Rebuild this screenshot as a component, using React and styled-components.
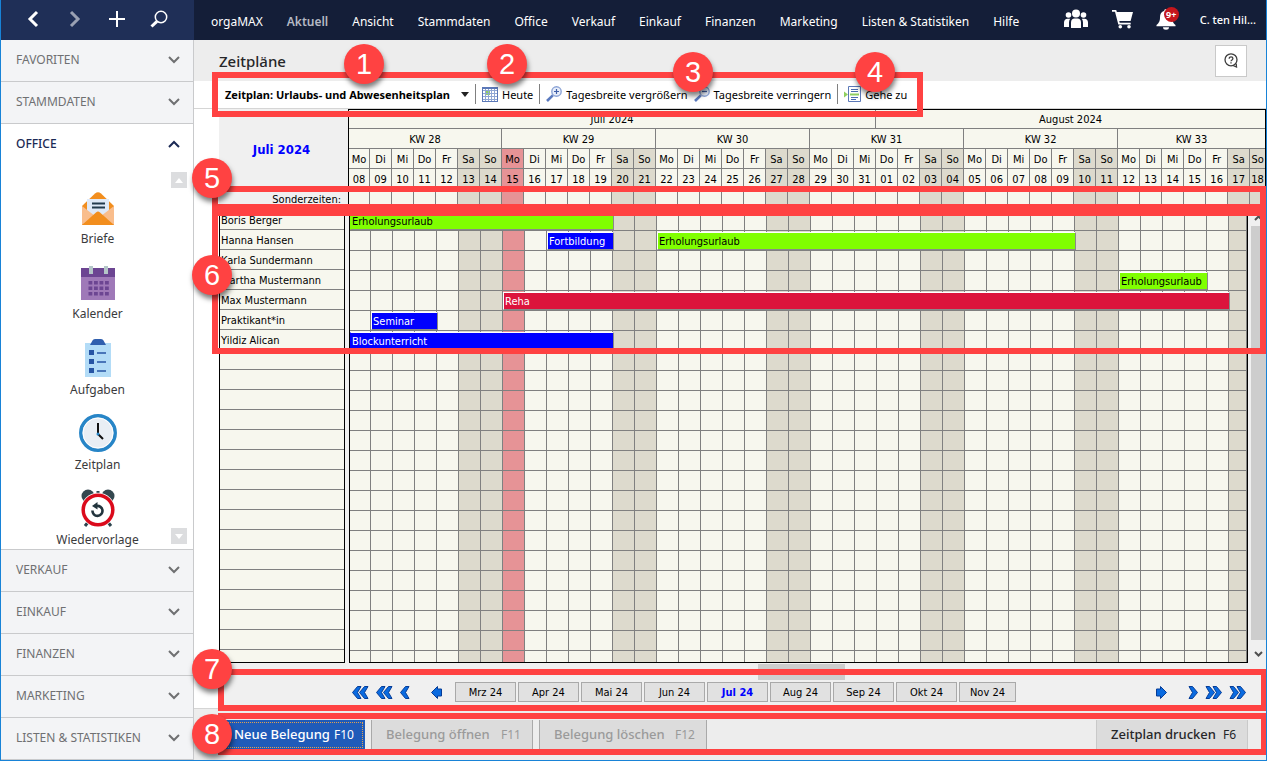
import React from "react";
import styled, { createGlobalStyle, css } from "styled-components";

const GlobalStyle = createGlobalStyle`
  *, *::before, *::after { box-sizing: border-box; }
  body { margin: 0; font-family: "Noto Sans", "Open Sans", sans-serif; font-size: 12px; color: #000; }
  button { font: inherit; color: inherit; border: 0; padding: 0; background: none; cursor: pointer; }
  ul { list-style: none; margin: 0; padding: 0; }
  svg { display: block; }
`;

const planFont = css`
  font-family: "DejaVu Sans Condensed", "DejaVu Sans", sans-serif;
  font-size: 11px;
`;

const RED = "#ff4242";
const LINE = "#808080";
const PAPER = "#f7f7ee";
const WEEKEND = "#dddacd";
const TODAY = "#e69396";

/* ---------- window ---------- */

const Window = styled.div`
  display: flex;
  flex-direction: column;
  height: 100vh;
  border: 1px solid #1883d7;
  border-top: 0;
  overflow: hidden;
  background: #fff;
`;

const TopBar = styled.header`
  display: flex;
  flex: none;
  height: 40px;
  background: #141e38;
  color: #fff;
`;

const QuickActions = styled.div`
  display: flex;
  flex: none;
  align-items: center;
  width: 193px;
  padding: 0 0 3px 11px;
  background: #1f2f57;
`;

const QuickButton = styled.button`
  display: grid;
  place-items: center;
  width: 42px;
  height: 36px;
  opacity: ${(p) => (p.$dim ? 0.55 : 1)};
`;

const MenuBar = styled.nav`
  display: flex;
  align-items: center;
  flex: 1;
  gap: 24px;
  padding: 3px 0 0 17px;
  white-space: nowrap;
`;

const MenuLink = styled.a`
  color: ${(p) => (p.$active ? "#b4b9c4" : "#fff")};
  font-weight: ${(p) => (p.$active ? 600 : 400)};
  text-decoration: none;
`;

const Status = styled.div`
  display: flex;
  flex: none;
  align-items: center;
  gap: 23px;
  padding: 0 10px 2px 0;
`;

const IconButton = styled.button`
  position: relative;
  display: block;
`;

const Count = styled.span`
  position: absolute;
  top: -1px;
  right: -2px;
  width: 15px;
  height: 15px;
  border-radius: 50%;
  background: #c4161c;
  font-size: 9px;
  font-weight: 700;
  line-height: 15px;
  text-align: center;
`;

const UserName = styled.button`
  font-size: 11px;
  font-weight: 500;
`;

const Content = styled.div`
  display: flex;
  flex: 1;
  min-height: 0;
`;

/* ---------- sidebar ---------- */

const Sidebar = styled.aside`
  display: flex;
  flex-direction: column;
  flex: none;
  width: 193px;
  border-right: 1px solid #c9cacc;
  background: #f3f4f6;
`;

const SectionButton = styled.button`
  display: flex;
  flex: none;
  align-items: center;
  justify-content: space-between;
  height: 42px;
  padding: 0 12px 2px 15px;
  border-bottom: 1px solid ${(p) => (p.$open ? "#fff" : "#c9cacc")};
  background: ${(p) => (p.$open ? "#fff" : "#f3f4f6")};
  color: ${(p) => (p.$open ? "#1b2a55" : "#6f7072")};
  font-weight: ${(p) => (p.$open ? 500 : 400)};
`;

const OfficePanel = styled.div`
  display: flex;
  flex: 1;
  min-height: 0;
  border-bottom: 1px solid #c9cacc;
  background: #fff;
`;

const OfficeList = styled.ul`
  flex: 1;
  padding: 23px 0 0 17px;
`;

const OfficeItem = styled.a`
  display: flex;
  flex-direction: column;
  align-items: center;
  justify-content: space-between;
  height: 59px;
  margin-bottom: 16px;
  color: #3a3a3c;
  text-decoration: none;
`;

const IconBox = styled.span`
  display: grid;
  flex: 1;
  place-items: center;
  padding-bottom: 4px;
`;

const ItemLabel = styled.span`
  line-height: 18px;
`;

const OfficeScroll = styled.div`
  display: flex;
  flex-direction: column;
  justify-content: space-between;
  flex: none;
  width: 22px;
  padding: 6px 6px 5px 0;
  margin-left: -6px;
`;

const ScrollStep = styled.button`
  display: grid;
  place-items: center;
  width: 16px;
  height: 16px;
  background: #dcdddf;
`;

/* ---------- main ---------- */

const Main = styled.main`
  display: flex;
  flex-direction: column;
  flex: 1;
  min-width: 0;
`;

const TitleBar = styled.div`
  display: flex;
  flex: none;
  align-items: center;
  justify-content: space-between;
  height: 41px;
  padding: 0 19px 0 25px;
  background: #ededed;
`;

const Title = styled.h1`
  margin: 0;
  color: #262628;
  font-size: 15px;
  font-weight: 500;
`;

const HelpButton = styled.button`
  display: grid;
  place-items: center;
  width: 32px;
  height: 32px;
  border: 1px solid #c9c9c9;
  background: #fff;
`;

const Toolbar = styled.div`
  position: relative;
  display: flex;
  flex: none;
  align-items: center;
  height: 28px;
  padding: 0 0 1px 31px;
  border-bottom: 1px solid #d5d5d5;
  font-size: 11px;
  white-space: nowrap;
`;

const Tool = styled.button`
  display: flex;
  align-items: center;
  gap: ${(p) => (p.$bold ? 11 : 4)}px;
  margin-right: 6px;
  font-weight: ${(p) => (p.$bold ? 700 : 400)};
`;

const Divider = styled.span`
  width: 1px;
  height: 20px;
  margin-right: 6px;
  background: #808080;
`;

const Plan = styled.section`
  display: flex;
  flex-direction: column;
  flex: 1;
  min-height: 0;
  margin-left: 25px;
  background: #f0f0f0;
  ${planFont}
`;

const PlanHead = styled.div`
  position: relative;
  display: flex;
  flex: none;
`;

const HeadSide = styled.div`
  display: flex;
  flex-direction: column;
  flex: none;
  width: 129px;
`;

const CurrentMonth = styled.div`
  display: grid;
  flex: 1;
  place-items: center;
  padding-right: 4px;
  color: #00f;
  font-size: 13px;
  font-weight: 700;
`;

const SpecialLabel = styled.div`
  height: 20px;
  padding: 1px 7px 0 0;
  line-height: 20px;
  text-align: right;
`;

const PlanTable = styled.table`
  width: 100%;
  border-spacing: 0;
  table-layout: fixed;
`;

const CalendarHead = styled.div`
  flex: 1;
  min-width: 0;
  border: 1px solid #000;
  border-bottom: 0;
  overflow: hidden;
`;

const cellTone = (p) => (p.$tone === "weekend" ? WEEKEND : p.$tone === "today" ? TODAY : PAPER);

const HeadCell = styled.th`
  height: ${(p) => p.$h || 20}px;
  padding: 2px 0 0;
  border-right: 1px solid ${LINE};
  border-bottom: 1px solid ${LINE};
  background: ${cellTone};
  font-weight: 400;
  line-height: 16px;
  white-space: nowrap;
  &:last-child { border-right: 0; }
`;

const PlanBody = styled.div`
  position: relative;
  display: flex;
  flex: 1 1 0;
  min-height: 0;
`;

const Names = styled.ul`
  flex: none;
  width: 126px;
  margin: 1px 4px 0 0;
  border: 1px solid #000;
  border-top: 0;
  background: ${PAPER};
  overflow: hidden;
`;

const Name = styled.li`
  height: 20px;
  padding: 1px 0 0 1px;
  border-bottom: 1px solid ${LINE};
  line-height: 20px;
`;

const GridFrame = styled.div`
  flex: 1;
  min-width: 0;
  margin-top: 2px;
  border: 1px solid #000;
  border-top: 0;
  overflow: hidden;
`;

const DayCell = styled.td`
  position: relative;
  height: 20px;
  padding: 0;
  border-right: 1px solid ${LINE};
  border-bottom: 1px solid ${LINE};
  background: ${cellTone};
`;

const Booking = styled.div`
  position: absolute;
  z-index: 1;
  top: 1px;
  left: 0;
  width: ${(p) => p.$days * 22 + (p.$first ? 0 : 1)}px;
  height: 18px;
  padding-left: ${(p) => (p.$first ? 1 : 1)}px;
  border: 1px solid;
  border-color: #fff #8a8a8a #8a8a8a ${(p) => (p.$first ? p.$color : "#fff")};
  background: ${(p) => p.$color};
  color: ${(p) => (p.$color === "#80ff00" ? "#000" : "#fff")};
  line-height: 17px;
  white-space: nowrap;
`;

const VScroll = styled.div`
  display: flex;
  flex-direction: column;
  align-items: center;
  justify-content: space-between;
  flex: none;
  width: 16px;
  margin-left: 2px;
  padding: 6px 0;
`;

const VThumb = styled.div`
  flex: 1;
  width: 15px;
  margin: 5px 0 11px;
  background: #cdcdcd;
`;

const HScroll = styled.div`
  display: flex;
  flex: none;
  align-items: center;
  justify-content: space-between;
  height: 17px;
  margin-left: 134px;
  padding: 1px 21px 0 4px;
`;

const HThumb = styled.div`
  width: 87px;
  height: 16px;
  background: #cdcdcd;
`;

const MonthNav = styled.nav`
  position: relative;
  display: flex;
  flex: none;
  align-items: center;
  height: 28px;
  padding: 0 20px 4px 133px;
`;

const JumpGroup = styled.div`
  display: flex;
  align-items: center;
  gap: 7px;
  &:last-of-type { margin-left: auto; }
`;

const JumpButton = styled.button`
  margin: ${(p) => (p.$step === "back" ? "0 0 0 13px" : p.$step === "forward" ? "0 13px 0 0" : "0")};
`;

const Months = styled.ul`
  display: flex;
  gap: 2px;
  margin: 0 auto 0 13px;
`;

const MonthButton = styled.button`
  width: ${(p) => (p.$last ? 57 : 61)}px;
  height: 20px;
  border: 1px solid #a9a9a9;
  background: #e1e1e1;
  color: ${(p) => (p.$active ? "#00f" : "#000")};
  font-weight: ${(p) => (p.$active ? 700 : 400)};
`;

const Footer = styled.footer`
  position: relative;
  display: flex;
  flex: none;
  height: 52px;
  gap: 6px;
  padding: 11px 18px 10px 25px;
  border-top: 1px solid #d5d5d5;
  background: #ededed;
`;

const Action = styled.button`
  display: flex;
  align-items: center;
  justify-content: space-between;
  width: ${(p) => p.$w}px;
  padding: 0 11px 2px 14px;
  border: solid #a9a9a9;
  border-width: 0 1px;
  background: #dcdcdc;
  color: #262628;
  font-size: 13px;
  font-weight: 500;
  white-space: nowrap;
  &:last-of-type { margin-left: auto; border-color: #c9c9c9; }
  &:disabled { color: #9a9a9a; }
  ${(p) =>
    p.$primary &&
    css`
      padding-left: 15px;
      border: 0;
      background: #1f5bb9;
      color: #fff;
      outline: 1px dotted #e0a050;
      outline-offset: -3px;
    `}
`;

const Key = styled.span`
  font-size: 12px;
  font-weight: 400;
`;

/* ---------- numbered markers ---------- */

const Frame = styled.div`
  position: absolute;
  z-index: 4;
  top: ${(p) => p.$top}px;
  left: ${(p) => p.$left}px;
  right: ${(p) => (p.$width ? "auto" : `${p.$right || 0}px`)};
  width: ${(p) => (p.$width ? `${p.$width}px` : "auto")};
  height: ${(p) => p.$height}px;
  border: 6px solid ${RED};
  pointer-events: none;
`;

const Marker = styled.span`
  position: absolute;
  z-index: 5;
  top: ${(p) => p.$top}px;
  left: ${(p) => p.$left}px;
  width: 40px;
  height: 40px;
  border-radius: 50%;
  background: ${RED};
  box-shadow: 1px 4px 5px rgba(0, 0, 0, 0.5);
  color: #fff;
  font: 29px/40px "Liberation Sans", Arial, sans-serif;
  text-align: center;
  pointer-events: none;
`;

/* ---------- icons ---------- */

const Chevron = ({ up }) => (
  <svg width="14" height="10" viewBox="0 0 14 10" fill="none" stroke="currentColor" strokeWidth="2">
    <path d={up ? "M2 8 7 3l5 5" : "M2 2l5 5 5-5"} />
  </svg>
);

const SmallArrow = ({ up, color = "#fff" }) => (
  <svg width="8" height="5" viewBox="0 0 8 5" fill={color}>
    <path d={up ? "M0 5 4 0l4 5z" : "M0 0h8L4 5z"} />
  </svg>
);

const ScrollChevron = ({ up }) => (
  <svg width="9" height="6" viewBox="0 0 9 6" fill="none" stroke="#505050" strokeWidth="2">
    <path d={up ? "M1 5l3.5-3.5L8 5" : "M1 1l3.5 3.5L8 1"} />
  </svg>
);

const BackIcon = ({ forward }) => (
  <svg width="12" height="18" viewBox="0 0 12 18" fill="none" stroke="#fff" strokeWidth="3">
    <path d={forward ? "M2 2l7 7-7 7" : "M10 2 3 9l7 7"} />
  </svg>
);

const PlusIcon = () => (
  <svg width="18" height="18" viewBox="0 0 18 18" stroke="#fff" strokeWidth="2">
    <path d="M1 9h16M9 1v16" />
  </svg>
);

const SearchIcon = () => (
  <svg width="18" height="18" viewBox="0 0 18 18" fill="none" stroke="#fff">
    <circle cx="11" cy="7" r="5.7" strokeWidth="1.5" />
    <path d="M7 11.3 1.5 16.5" strokeWidth="3" />
  </svg>
);

const PeopleIcon = () => (
  <svg width="26" height="20" viewBox="0 0 26 20" fill="#fff">
    <circle cx="13" cy="4.5" r="4" />
    <circle cx="5.5" cy="6" r="2.8" />
    <circle cx="20.5" cy="6" r="2.8" />
    <path d="M8 19v-5.500c0-2.500 1.500-4 3.500-4h3c2 0 3.500 1.500 3.500 4V19z" />
    <path d="M1 18v-4.500c0-2.300 1.500-3.700 3.500-3.700h2.700c-.8 1-1.200 2.200-1.200 3.700V18zM25 18v-4.500c0-2.300-1.500-3.700-3.500-3.700h-2.700c.8 1 1.200 2.200 1.200 3.700V18z" />
  </svg>
);

const CartIcon = () => (
  <svg width="21" height="19" viewBox="0 0 21 19" fill="#fff">
    <path d="M0 0h4.200l.7 2H21l-2.400 9H7.300l.4 1.800h11V14.500H6.300L3 1.700H0z" />
    <circle cx="8.300" cy="16.800" r="1.800" />
    <circle cx="17" cy="16.800" r="1.800" />
  </svg>
);

const BellIcon = () => (
  <svg width="21" height="22" viewBox="0 0 21 22" fill="#fff">
    <path d="M10 1c-1.200 0-1.700.8-1.700 1.800C5.300 3.600 4 6 4 9.300c0 4-.9 5.500-3.500 7.700v1.200h19V17C17 14.800 16 13.300 16 9.300c0-3.300-1.300-5.700-4.300-6.500C11.700 1.800 11.200 1 10 1z" />
    <path d="M7 19.200h6a3 2.500 0 0 1-6 0z" />
  </svg>
);

const HelpIcon = () => (
  <svg width="15" height="15" viewBox="0 0 15 15" fill="none" stroke="#3d3d3d">
    <circle cx="7" cy="6.800" r="6" strokeWidth="1.300" />
    <path d="M9 12.500l3.500 1.500-.3-3.500" strokeWidth="1.300" />
    <path d="M5.200 5.700c0-2.500 3.700-2.300 3.700-.1C8.900 7 7 6.900 7 8.300M7 9.200v1.300" strokeWidth="1.300" />
  </svg>
);

const MonthGridIcon = () => (
  <svg width="16" height="15" viewBox="0 0 16 15" shapeRendering="crispEdges">
    <path fill="#fff" stroke="#5b78b8" d="M.5.500h15v14H.500z" />
    <path fill="#8fcf5f" d="M3 4h5v4H3z" />
    <path stroke="#8fa6d4" fill="none" d="M3.500 1v13M6.500 1v13M9.500 1v13M12.500 1v13M1 3.500h14M1 6.500h14M1 9.500h14M1 12.500h14" />
    <path stroke="#5b78b8" d="M0 1h16" strokeWidth="2" />
  </svg>
);

const ZoomIcon = ({ plus }) => (
  <svg width="16" height="16" viewBox="0 0 16 16" fill="none">
    <circle cx="10.500" cy="5.500" r="4.700" fill="#e8eefa" stroke="#8ca4d6" strokeWidth="1.400" />
    <path stroke="#5a7abf" strokeWidth="2.600" d="M6.800 9.400 1 15" />
    <path stroke="#3f5fa8" strokeWidth="1.200" d={plus ? "M8 5.500h5M10.500 3v5" : "M8 5.500h5"} />
  </svg>
);

const GotoIcon = () => (
  <svg width="17" height="16" viewBox="0 0 17 16" fill="none">
    <path fill="#fff" stroke="#5b78b8" d="M4.500.500h12v15h-12z" />
    <path stroke="#4a6cb0" d="M7 3.500h7M7 5.500h7M7 11.500h7M7 13.500h5" />
    <path stroke="#8fcf5f" strokeWidth="2" d="M6 8.500h9" />
    <path fill="#8fcf5f" d="M0 5.500 4 8.500 0 11.500z" />
  </svg>
);

const LetterIcon = () => (
  <svg width="34" height="34" viewBox="0 0 34 34">
    <path fill="#f28e1e" d="M1 15 14 2.500c2-1.800 4-1.800 6 0L33 15v19H1z" />
    <path fill="#dfe9f8" d="M6 8h22v12l-11 9L6 20z" />
    <path stroke="#233a4d" strokeWidth="2" d="M11 12.500h13M11 16.500h13" />
    <path fill="#f9bd8c" d="M1 15l13 10L1 34zM33 15 20 25l13 9z" />
    <path fill="#f28e1e" d="M1 34 15 21.500c1.500-1.300 2.500-1.300 4 0L33 34z" />
  </svg>
);

const CalendarIcon = () => (
  <svg width="34" height="35" viewBox="0 0 34 35">
    <path fill="#9f79b8" d="M0 4h34v31H0z" />
    <path fill="#6c4592" d="M0 3h34v9H0z" />
    <path fill="#b4c6c8" d="M8 1h4v8H8zM23 1h4v8h-4z" />
    <g fill="#6c4592">
      {[16, 21.5, 27].map((y) =>
        [7.5, 13, 18.5, 24].map((x) => <rect key={`${x}-${y}`} x={x} y={y} width="3.8" height="3.5" />)
      )}
    </g>
  </svg>
);

const TasksIcon = () => (
  <svg width="26" height="38" viewBox="0 0 26 38">
    <path fill="#b3dcf7" d="M0 4h26v34H0z" />
    <path fill="#305fae" d="M5 6 7.500 1.500Q8 0 10 0h6q2 0 2.500 1.500L21 6z" />
    {[11, 20, 29].map((y) => (
      <g key={y}>
        <rect x="4" y={y} width="5" height="5" fill="#2655a4" />
        <path stroke="#2655a4" strokeWidth="1.5" d={`M12 ${y + 3}h9`} />
      </g>
    ))}
  </svg>
);

const ClockIcon = () => (
  <svg width="38" height="38" viewBox="0 0 38 38">
    <circle cx="19" cy="19" r="17.200" fill="#e9eef4" stroke="#2785c7" strokeWidth="3.500" />
    <circle cx="19" cy="19" r="15" fill="none" stroke="#fff" />
    <path fill="none" stroke="#111" strokeWidth="2" d="M19 9v11l5 5" />
    <circle cx="19" cy="20" r="1.500" fill="#2785c7" />
  </svg>
);

const AlarmIcon = () => (
  <svg width="36" height="38" viewBox="0 0 36 38">
    <path stroke="#2d454f" strokeWidth="3" d="M9 32l-4 5M27 32l4 5M18 2v5" />
    <circle cx="8" cy="7" r="6.500" fill="#34474f" />
    <circle cx="28" cy="7" r="6.500" fill="#34474f" />
    <circle cx="18" cy="21" r="15.200" fill="#fff" stroke="#fff" strokeWidth="4" />
    <circle cx="18" cy="21" r="14.800" fill="#fff" stroke="#db0a1b" strokeWidth="3.500" />
    <path fill="none" stroke="#22343d" strokeWidth="2.600" d="M16.500 17a5 5 0 1 1-4 4.500" />
    <path fill="#22343d" d="M12 17l5.500-4v7.500z" />
  </svg>
);

const JumpIcon = ({ kind, right }) => {
  const wide = kind === "double";
  const w = wide ? 17 : 11;
  const chevron = "M5.500.500H9L5.500 6.500 9 12.500H5.500L.500 6.500z";
  return (
    <svg width={w} height="13" viewBox={`0 0 ${w} 13`} fill="#0a6be0" stroke="#063c96">
      <g transform={right ? `translate(${w} 0) scale(-1 1)` : undefined}>
        {kind === "step" ? (
          <path d="M.500 6.500 6.500.500V3h4v7h-4v2.500z" />
        ) : (
          <>
            <path d={chevron} />
            {wide && <path d={chevron} transform="translate(7 0)" />}
          </>
        )}
      </g>
    </svg>
  );
};

/* ---------- data ---------- */

const MENU = ["orgaMAX", "Aktuell", "Ansicht", "Stammdaten", "Office", "Verkauf", "Einkauf", "Finanzen", "Marketing", "Listen & Statistiken", "Hilfe"];

const OFFICE = [
  ["Briefe", LetterIcon],
  ["Kalender", CalendarIcon],
  ["Aufgaben", TasksIcon],
  ["Zeitplan", ClockIcon],
  ["Wiedervorlage", AlarmIcon],
];

const WEEKDAYS = ["Mo", "Di", "Mi", "Do", "Fr", "Sa", "So"];
const DAYS = Array.from({ length: 42 }, (_, i) => ({
  name: WEEKDAYS[i % 7],
  date: String(i < 24 ? i + 8 : i - 23).padStart(2, "0"),
  tone: i === 7 ? "today" : i % 7 > 4 ? "weekend" : "plain",
}));

const GREEN = "#80ff00";
const BLUE = "#0000ff";
const STAFF = [
  { name: "Boris Berger", bookings: [[0, 12, "Erholungsurlaub", GREEN]] },
  { name: "Hanna Hansen", bookings: [[9, 3, "Fortbildung", BLUE], [14, 19, "Erholungsurlaub", GREEN]] },
  { name: "Karla Sundermann", bookings: [] },
  { name: "Martha Mustermann", bookings: [[35, 4, "Erholungsurlaub", GREEN]] },
  { name: "Max Mustermann", bookings: [[7, 33, "Reha", "#dc143c"]] },
  { name: "Praktikant*in", bookings: [[1, 3, "Seminar", BLUE]] },
  { name: "Yildiz Alican", bookings: [[0, 12, "Blockunterricht", BLUE]] },
];
const ROWS = [...STAFF, ...Array.from({ length: 43 }, () => ({ name: "", bookings: [] }))];

const MONTHS = ["Mrz 24", "Apr 24", "Mai 24", "Jun 24", "Jul 24", "Aug 24", "Sep 24", "Okt 24", "Nov 24"];

const DayColumns = ({ count }) => (
  <colgroup>
    {DAYS.slice(0, count).map((_, i) => (
      <col key={i} style={{ width: i === 0 ? 21 : i === count - 1 ? "auto" : 22 }} />
    ))}
  </colgroup>
);

/* ---------- parts ---------- */

const Section = ({ label, open }) => (
  <SectionButton $open={open} aria-expanded={!!open}>
    {label}
    <Chevron up={open} />
  </SectionButton>
);

const Calendar = () => (
  <CalendarHead>
    <PlanTable>
      <DayColumns count={42} />
      <thead>
        <tr>
          <HeadCell $h={19} colSpan={24}>Juli 2024</HeadCell>
          <HeadCell $h={19} colSpan={18}>August 2024</HeadCell>
        </tr>
        <tr>
          {[28, 29, 30, 31, 32, 33].map((w) => (
            <HeadCell key={w} colSpan={7}>KW {w}</HeadCell>
          ))}
        </tr>
        <tr>{DAYS.map((d, i) => <HeadCell key={i} $tone={d.tone}>{d.name}</HeadCell>)}</tr>
        <tr>{DAYS.map((d, i) => <HeadCell key={i} $tone={d.tone}>{d.date}</HeadCell>)}</tr>
        <tr>{DAYS.map((d, i) => <HeadCell key={i} as="td" $tone={d.tone} />)}</tr>
      </thead>
    </PlanTable>
  </CalendarHead>
);

const BookingGrid = () => (
  <GridFrame>
    <PlanTable>
      <DayColumns count={41} />
      <tbody>
        {ROWS.map((row, r) => (
          <tr key={r}>
            {DAYS.slice(0, 41).map((d, i) => (
              <DayCell key={i} $tone={d.tone}>
                {row.bookings
                  .filter(([start]) => start === i)
                  .map(([start, days, label, color]) => (
                    <Booking key={start} $days={days} $first={start === 0} $color={color}>{label}</Booking>
                  ))}
              </DayCell>
            ))}
          </tr>
        ))}
      </tbody>
    </PlanTable>
  </GridFrame>
);

export default function App() {
  return (
    <>
      <GlobalStyle />
      <Window>
        <TopBar>
          <QuickActions>
            <QuickButton aria-label="Zurück"><BackIcon /></QuickButton>
            <QuickButton aria-label="Vor" $dim><BackIcon forward /></QuickButton>
            <QuickButton aria-label="Neu"><PlusIcon /></QuickButton>
            <QuickButton aria-label="Suchen"><SearchIcon /></QuickButton>
          </QuickActions>
          <MenuBar>
            {MENU.map((m) => (
              <MenuLink key={m} href="#" $active={m === "Aktuell"}>{m}</MenuLink>
            ))}
          </MenuBar>
          <Status>
            <IconButton aria-label="Kontakte"><PeopleIcon /></IconButton>
            <IconButton aria-label="Warenkorb"><CartIcon /></IconButton>
            <IconButton aria-label="Meldungen"><BellIcon /><Count>9+</Count></IconButton>
            <UserName>C. ten Hil...</UserName>
          </Status>
        </TopBar>

        <Content>
          <Sidebar>
            <Section label="FAVORITEN" />
            <Section label="STAMMDATEN" />
            <Section label="OFFICE" open />
            <OfficePanel>
              <OfficeList>
                {OFFICE.map(([label, Icon]) => (
                  <li key={label}>
                    <OfficeItem href="#">
                      <IconBox><Icon /></IconBox>
                      <ItemLabel>{label}</ItemLabel>
                    </OfficeItem>
                  </li>
                ))}
              </OfficeList>
              <OfficeScroll>
                <ScrollStep aria-label="Nach oben"><SmallArrow up /></ScrollStep>
                <ScrollStep aria-label="Nach unten"><SmallArrow /></ScrollStep>
              </OfficeScroll>
            </OfficePanel>
            <Section label="VERKAUF" />
            <Section label="EINKAUF" />
            <Section label="FINANZEN" />
            <Section label="MARKETING" />
            <Section label="LISTEN & STATISTIKEN" />
          </Sidebar>

          <Main>
            <TitleBar>
              <Title>Zeitpläne</Title>
              <HelpButton aria-label="Hilfe"><HelpIcon /></HelpButton>
            </TitleBar>
            <Toolbar>
              <Tool $bold>
                Zeitplan: Urlaubs- und Abwesenheitsplan
                <SmallArrow color="#222" />
              </Tool>
              <Divider />
              <Tool><MonthGridIcon />Heute</Tool>
              <Divider />
              <Tool><ZoomIcon plus />Tagesbreite vergrößern</Tool>
              <Tool><ZoomIcon />Tagesbreite verringern</Tool>
              <Divider />
              <Tool><GotoIcon />Gehe zu</Tool>
              <Frame $top={-9} $left={18} $width={711} $height={45} />
              <Marker $top={-37} $left={150}>1</Marker>
              <Marker $top={-37} $left={293}>2</Marker>
              <Marker $top={-29} $left={479}>3</Marker>
              <Marker $top={-29} $left={661}>4</Marker>
            </Toolbar>

            <Plan>
              <PlanHead>
                <HeadSide>
                  <CurrentMonth>Juli 2024</CurrentMonth>
                  <SpecialLabel>Sonderzeiten:</SpecialLabel>
                </HeadSide>
                <Calendar />
                <Frame $top={77} $left={-7} $height={24} />
                <Marker $top={49} $left={-27}>5</Marker>
              </PlanHead>
              <PlanBody>
                <Names>
                  {ROWS.map((row, r) => <Name key={r}>{row.name}</Name>)}
                </Names>
                <BookingGrid />
                <VScroll>
                  <ScrollChevron up />
                  <VThumb />
                  <ScrollChevron />
                </VScroll>
                <Frame $top={1} $left={-7} $height={144} />
                <Marker $top={46} $left={-27}>6</Marker>
              </PlanBody>
              <HScroll>
                <SmallArrow up color="#505050" />
                <HThumb />
                <SmallArrow up color="#505050" />
              </HScroll>
              <MonthNav>
                <JumpGroup>
                  <JumpButton aria-label="Drei Schritte zurück"><JumpIcon kind="double" /></JumpButton>
                  <JumpButton aria-label="Zwei Schritte zurück"><JumpIcon kind="double" /></JumpButton>
                  <JumpButton aria-label="Ein Monat zurück"><JumpIcon /></JumpButton>
                  <JumpButton aria-label="Ein Tag zurück" $step="back"><JumpIcon kind="step" /></JumpButton>
                </JumpGroup>
                <Months>
                  {MONTHS.map((m, i) => (
                    <li key={m}>
                      <MonthButton $active={m === "Jul 24"} $last={i === MONTHS.length - 1}>{m}</MonthButton>
                    </li>
                  ))}
                </Months>
                <JumpGroup>
                  <JumpButton aria-label="Ein Tag vor" $step="forward"><JumpIcon kind="step" right /></JumpButton>
                  <JumpButton aria-label="Ein Monat vor"><JumpIcon right /></JumpButton>
                  <JumpButton aria-label="Zwei Schritte vor"><JumpIcon kind="double" right /></JumpButton>
                  <JumpButton aria-label="Drei Schritte vor"><JumpIcon kind="double" right /></JumpButton>
                </JumpGroup>
                <Frame $top={-11} $left={-1} $right={-1} $height={42} />
                <Marker $top={-31} $left={-27}>7</Marker>
              </MonthNav>
            </Plan>

            <Footer>
              <Action $primary $w={146}>Neue Belegung<Key>F10</Key></Action>
              <Action $w={162} disabled>Belegung öffnen<Key>F11</Key></Action>
              <Action $w={168} disabled>Belegung löschen<Key>F12</Key></Action>
              <Action $w={152}>Zeitplan drucken<Key>F6</Key></Action>
              <Frame $top={4} $left={24} $right={-1} $height={42} />
              <Marker $top={5} $left={-2}>8</Marker>
            </Footer>
          </Main>
        </Content>
      </Window>
    </>
  );
}
